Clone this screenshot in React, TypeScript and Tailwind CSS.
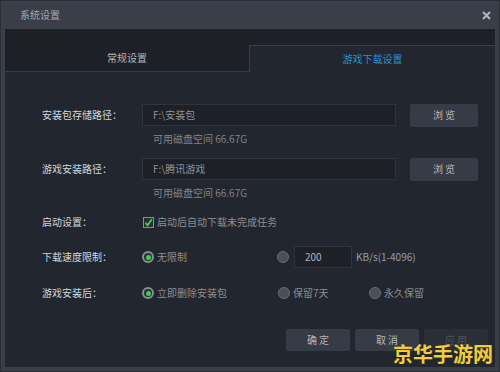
import React from "react";

const font = { fontFamily: '"Noto Sans CJK SC", "Noto Sans", sans-serif' };

function RadioOn() {
  return (
    <span className="w-[12px] h-[12px] rounded-full border-[2px] border-[#8a8e94] bg-[#2a2d33] flex items-center justify-center shrink-0">
      <span className="w-[5px] h-[5px] rounded-full bg-[#3ad14c]" />
    </span>
  );
}

function RadioOff() {
  return <span className="w-[12px] h-[12px] rounded-full border border-[#6a6e75] bg-[#4a4e55] shrink-0" />;
}

export default function App() {
  return (
    <div
      style={font}
      className="relative w-[500px] h-[372px] bg-[#393e48] border border-[#2a2e35] flex flex-col overflow-hidden"
    >
      {/* Title bar */}
      <div className="h-[28px] flex items-center justify-between pl-[19px] pr-[8px]">
        <span className="text-[10px] leading-[12px] text-[#a3a7ae]">系统设置</span>
        <svg width="9" height="9" viewBox="0 0 9 9">
          <path d="M1 1L8 8M8 1L1 8" stroke="#b3b7bd" strokeWidth="2" />
        </svg>
      </div>

      {/* Panel */}
      <div className="flex-1 mx-[4px] mb-[4px] bg-[#22262e] flex flex-col">
        {/* Tabs */}
        <div className="h-[43px] bg-[#1d2027] flex items-end">
          <div className="w-[244px] h-[27px] border-b border-[#363a43] flex items-center justify-center text-[10px] leading-[12px] text-[#b2b6bc]">
            常规设置
          </div>
          <div className="flex-1 h-[27px] border-t border-l border-[#3a3f48] bg-[#22262e] flex items-center justify-center text-[10px] leading-[12px] text-[#2b8fd8]">
            游戏下载设置
          </div>
        </div>

        {/* Body */}
        <div className="pl-[37px] pt-[32px] flex flex-col text-[10px] leading-[12px]">
          {/* Row 1 */}
          <div className="flex items-center h-[22px]">
            <span className="w-[100px] text-[#d4d7db]">安装包存储路径：</span>
            <div className="w-[254px] h-[22px] bg-[#1d2027] border border-[#30343c] flex items-center pl-[10px] text-[#8e9299]">
              F:\安装包
            </div>
            <button className="ml-[14px] w-[68px] h-[23px] bg-[#363b45] rounded-[2px] text-[#b4b8be]">
              浏 览
            </button>
          </div>
          <div className="mt-[7px] ml-[111px] text-[#80848b]">可用磁盘空间 66.67G</div>

          {/* Row 2 */}
          <div className="mt-[13px] flex items-center h-[22px]">
            <span className="w-[100px] text-[#d4d7db]">游戏安装路径：</span>
            <div className="w-[254px] h-[22px] bg-[#1d2027] border border-[#30343c] flex items-center pl-[10px] text-[#8e9299]">
              F:\腾讯游戏
            </div>
            <button className="ml-[14px] w-[68px] h-[23px] bg-[#363b45] rounded-[2px] text-[#b4b8be]">
              浏 览
            </button>
          </div>
          <div className="mt-[7px] ml-[111px] text-[#80848b]">可用磁盘空间 66.67G</div>

          {/* Row 3 */}
          <div className="mt-[16px] flex items-center h-[14px]">
            <span className="w-[101px] text-[#d4d7db]">启动设置：</span>
            <span className="w-[11px] h-[11px] border border-[#8a8e94] bg-[#2b2e35] flex items-center justify-center">
              <svg width="9" height="9" viewBox="0 0 9 9">
                <path d="M1.5 4.8L3.6 7.2L7.8 1.2" stroke="#3ad14c" strokeWidth="1.8" fill="none" />
              </svg>
            </span>
            <span className="ml-[3px] text-[#8a8e95]">启动后自动下载未完成任务</span>
          </div>

          {/* Row 4 */}
          <div className="mt-[17px] flex items-center h-[22px]">
            <span className="w-[100px] text-[#d4d7db]">下载速度限制：</span>
            <div className="w-[135px] flex items-center">
              <RadioOn />
              <span className="ml-[3px] text-[#8a8e95]">无限制</span>
            </div>
            <RadioOff />
            <div className="ml-[5px] w-[58px] h-[22px] bg-[#1d2027] border border-[#30343c] flex items-center pl-[10px] text-[#b0b4b9]">
              200
            </div>
            <span className="ml-[4px] text-[#9a9ea4]">KB/s(1-4096)</span>
          </div>

          {/* Row 5 */}
          <div className="mt-[18px] flex items-center h-[14px]">
            <span className="w-[100px] text-[#d4d7db]">游戏安装后：</span>
            <div className="w-[136px] flex items-center">
              <RadioOn />
              <span className="ml-[3px] text-[#8a8e95]">立即删除安装包</span>
            </div>
            <div className="w-[91px] flex items-center">
              <RadioOff />
              <span className="ml-[3px] text-[#8a8e95]">保留7天</span>
            </div>
            <div className="flex items-center">
              <RadioOff />
              <span className="ml-[3px] text-[#8a8e95]">永久保留</span>
            </div>
          </div>
        </div>

        {/* Buttons */}
        <div className="mt-[29px] flex justify-end gap-[5px] pr-[7px] text-[10px] leading-[12px]">
          <button className="w-[64px] h-[22px] bg-[#363b45] rounded-[2px] text-[#b4b8be]">确 定</button>
          <button className="w-[64px] h-[22px] bg-[#363b45] rounded-[2px] text-[#b4b8be]">取 消</button>
          <button className="w-[64px] h-[22px] bg-[#2a2e36] rounded-[2px] text-[#4e525a]">应 用</button>
        </div>
      </div>

      {/* Watermark */}
      <div className="absolute left-[392px] top-[340px] text-[20px] leading-[26px] font-bold text-[#f2cd3a] tracking-[0px]">
        京华手游网
      </div>
    </div>
  );
}
